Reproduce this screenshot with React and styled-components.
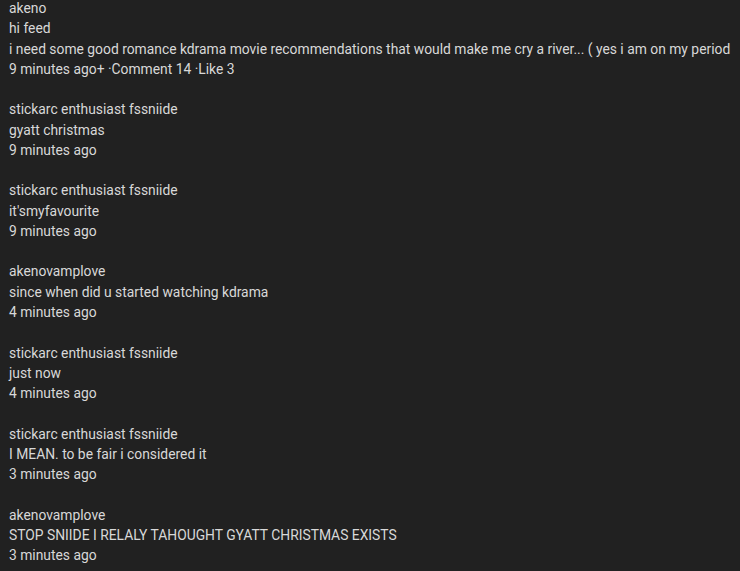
import React from "react"
import styled, { createGlobalStyle } from "styled-components"

const Global = createGlobalStyle`
  html, body {
    margin: 0;
    background: #212121;
  }
`

const Feed = styled.div`
  padding: 0 9px;
  margin-top: -2px;
  font-family: Roboto, "Liberation Sans", sans-serif;
  font-size: 13.85px;
  line-height: 20.27px;
  color: #d8d8d8;
  overflow: hidden;
`

const Post = styled.div`
  margin-bottom: 20.27px;
`

const Line = styled.div`
  white-space: nowrap;
`

const posts = [
  {
    author: "akeno",
    lines: [
      "hi feed",
      "i need some good romance kdrama movie recommendations that would make me cry a river... ( yes i am on my period",
    ],
    meta: "9 minutes ago+ ·Comment 14 ·Like 3",
  },
  { author: "stickarc enthusiast fssniide", lines: ["gyatt christmas"], meta: "9 minutes ago" },
  { author: "stickarc enthusiast fssniide", lines: ["it'smyfavourite"], meta: "9 minutes ago" },
  { author: "akenovamplove", lines: ["since when did u started watching kdrama"], meta: "4 minutes ago" },
  { author: "stickarc enthusiast fssniide", lines: ["just now"], meta: "4 minutes ago" },
  { author: "stickarc enthusiast fssniide", lines: ["I MEAN. to be fair i considered it"], meta: "3 minutes ago" },
  { author: "akenovamplove", lines: ["STOP SNIIDE I RELALY TAHOUGHT GYATT CHRISTMAS EXISTS"], meta: "3 minutes ago" },
]

export default function App() {
  return (
    <>
      <Global />
      <Feed>
        {posts.map((p, i) => (
          <Post key={i}>
            <Line>{p.author}</Line>
            {p.lines.map((l, j) => (
              <Line key={j}>{l}</Line>
            ))}
            <Line>{p.meta}</Line>
          </Post>
        ))}
      </Feed>
    </>
  )
}
